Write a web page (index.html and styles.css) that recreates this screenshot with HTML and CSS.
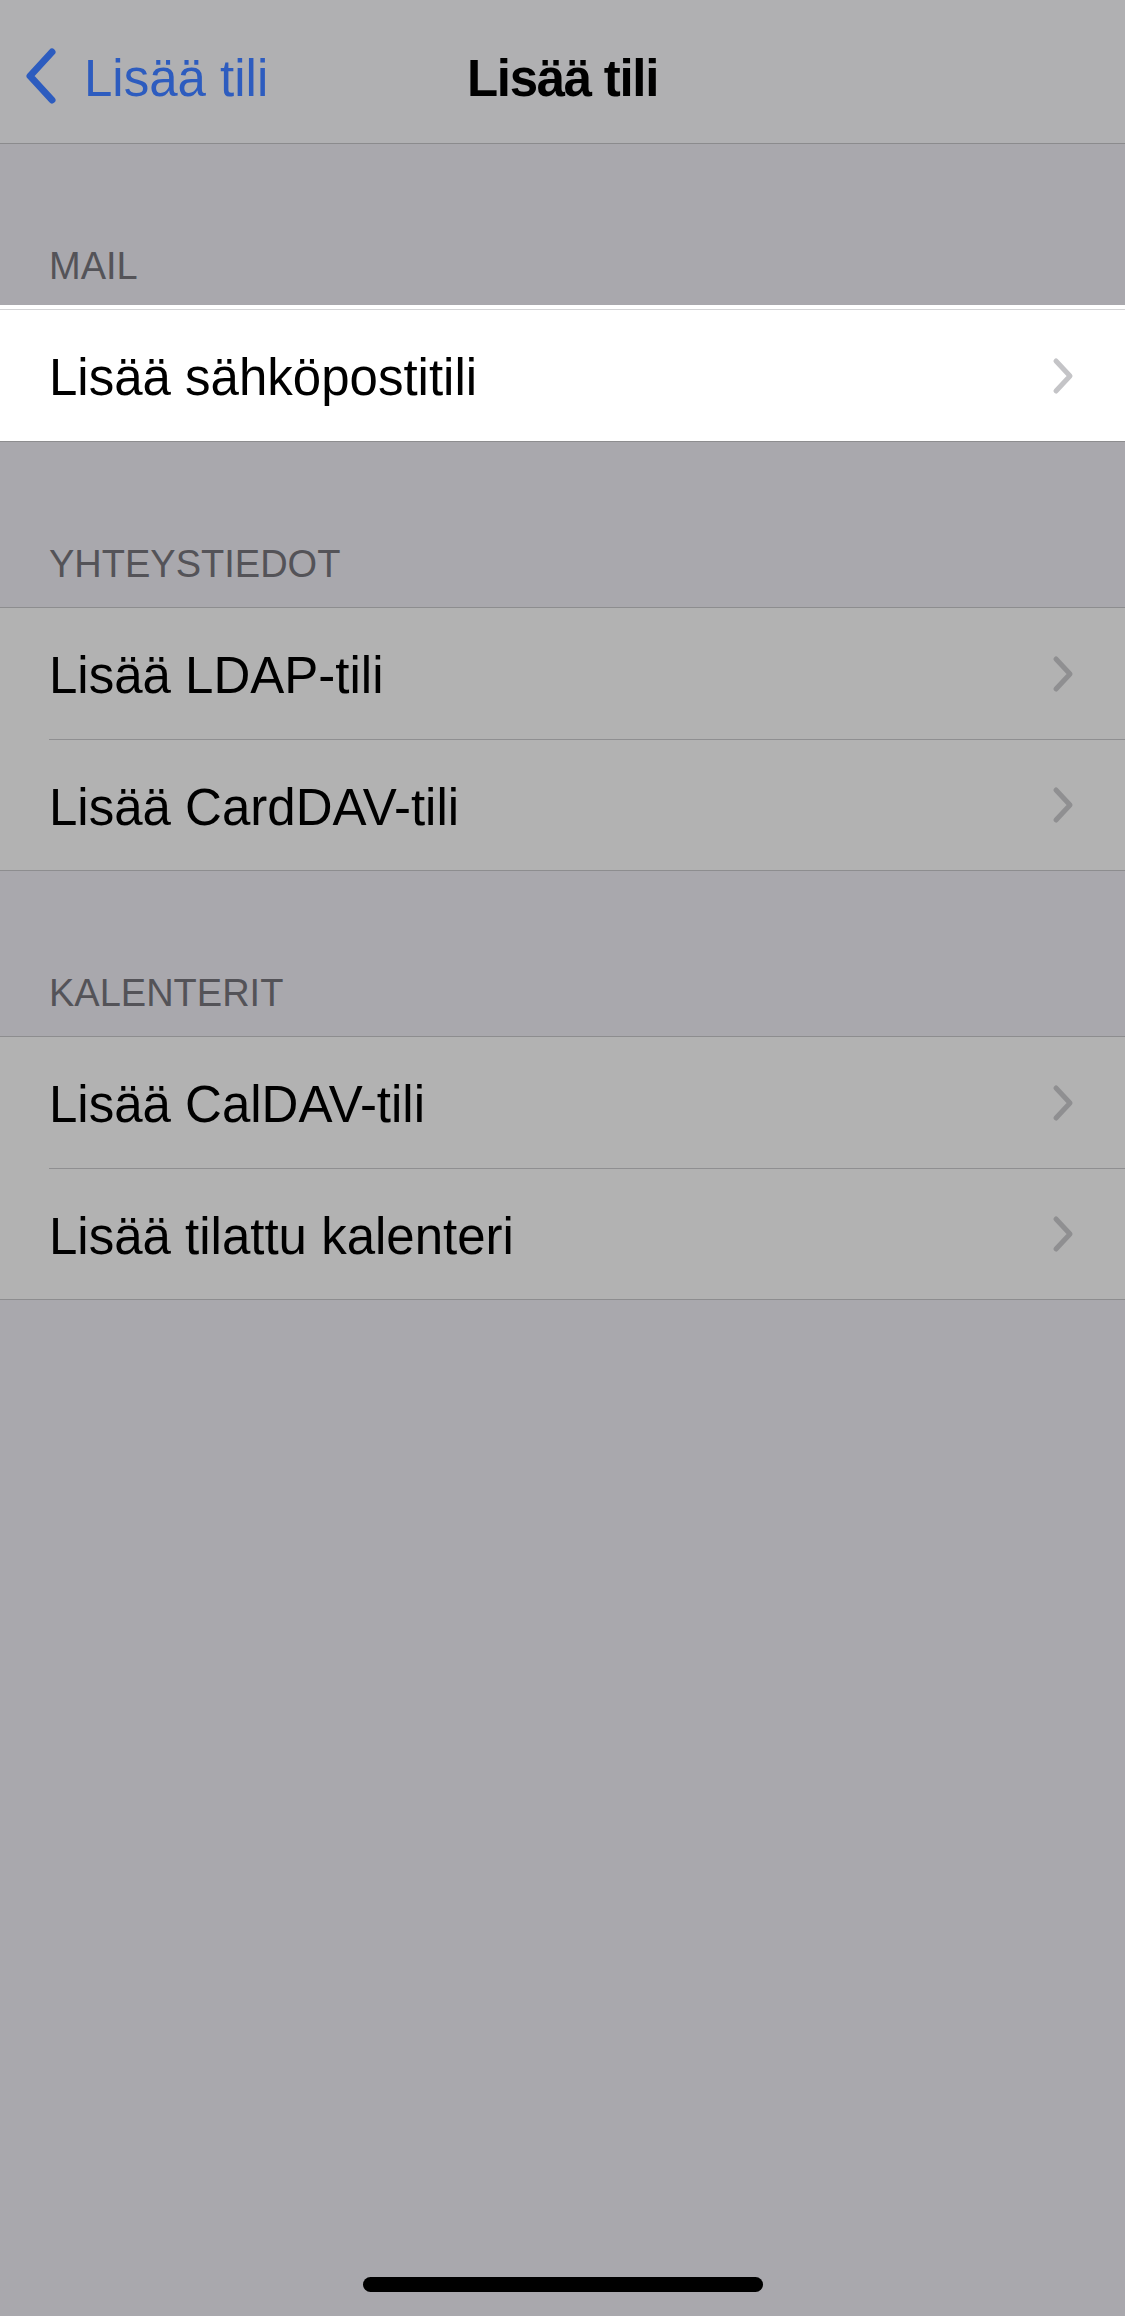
FILE: index.html
```html
<!DOCTYPE html>
<html lang="fi">
<head>
  <meta charset="UTF-8">
  <title>Lisää tili</title>
  <link rel="stylesheet" href="styles.css">
</head>
<body>
  <div class="screen">
    <header class="navbar">
      <a class="back" href="#">
        <svg class="back-icon" width="34" height="58" viewBox="0 0 34 58">
          <polyline points="29,5 7,29 29,53" fill="none" stroke="currentColor" stroke-width="7" stroke-linecap="round" stroke-linejoin="round"/>
        </svg>
        <span>Lisää tili</span>
      </a>
      <h1 class="title">Lisää tili</h1>
      <div></div>
    </header>

    <div class="section-header">MAIL</div>
    <ul class="group active">
      <li class="row">Lisää sähköpostitili<svg class="chevron" width="24" height="40" viewBox="0 0 24 40"><polyline points="5,5 19,20 5,35" fill="none" stroke="currentColor" stroke-width="5" stroke-linecap="round" stroke-linejoin="round"/></svg></li>
    </ul>

    <div class="section-header">YHTEYSTIEDOT</div>
    <ul class="group">
      <li class="row">Lisää LDAP-tili<svg class="chevron" width="24" height="40" viewBox="0 0 24 40"><polyline points="5,5 19,20 5,35" fill="none" stroke="currentColor" stroke-width="5" stroke-linecap="round" stroke-linejoin="round"/></svg></li>
      <li class="row">Lisää CardDAV-tili<svg class="chevron" width="24" height="40" viewBox="0 0 24 40"><polyline points="5,5 19,20 5,35" fill="none" stroke="currentColor" stroke-width="5" stroke-linecap="round" stroke-linejoin="round"/></svg></li>
    </ul>

    <div class="section-header">KALENTERIT</div>
    <ul class="group">
      <li class="row">Lisää CalDAV-tili<svg class="chevron" width="24" height="40" viewBox="0 0 24 40"><polyline points="5,5 19,20 5,35" fill="none" stroke="currentColor" stroke-width="5" stroke-linecap="round" stroke-linejoin="round"/></svg></li>
      <li class="row">Lisää tilattu kalenteri<svg class="chevron" width="24" height="40" viewBox="0 0 24 40"><polyline points="5,5 19,20 5,35" fill="none" stroke="currentColor" stroke-width="5" stroke-linecap="round" stroke-linejoin="round"/></svg></li>
    </ul>

    <div class="home-indicator"></div>
  </div>
</body>
</html>
```

FILE: styles.css
```css
body {
  margin: 0;
  font-family: "Liberation Sans", Arial, sans-serif;
  background-color: #a9a8ad;
  color: #000;
}

.screen {
  min-height: 2316px;
  display: flex;
  flex-direction: column;
}

.navbar {
  height: 144px;
  box-sizing: border-box;
  border-bottom: 1px solid #8b8b8d;
  background-color: #b0b0b2;
  display: grid;
  grid-template-columns: 1fr auto 1fr;
  align-items: start;
  padding-top: 48px;
}

.back {
  display: flex;
  align-items: center;
  color: #2d5cbf;
  text-decoration: none;
  font-size: 51px;
  line-height: 61px;
  margin-left: 23px;
}

.back-icon {
  margin-top: -6px;
  margin-right: 27px;
}

.title {
  margin: 0;
  font-size: 51px;
  line-height: 61px;
  font-weight: bold;
  letter-spacing: -1.3px;
}

.section-header {
  height: 165px;
  box-sizing: border-box;
  display: flex;
  align-items: flex-end;
  padding: 0 0 20px 49px;
  font-size: 38px;
  line-height: 46px;
  color: #545358;
}

.group {
  list-style: none;
  margin: 0;
  padding: 0;
  background-color: #b2b2b2;
  border-top: 1px solid #8d8d8f;
  border-bottom: 1px solid #8d8d8f;
}

.group.active {
  background-color: #fff;
  border-top-color: #d4d4d6;
  box-shadow: 0 -4px 0 #fff;
}

.row {
  height: 131px;
  box-sizing: border-box;
  margin-left: 49px;
  padding: 4px 50px 0 0;
  display: flex;
  align-items: center;
  justify-content: space-between;
  font-size: 51px;
  line-height: 61px;
}

.row + .row {
  border-top: 1px solid #8f8f91;
}

.chevron {
  color: #8f8f91;
  margin-top: -4px;
}

.active .chevron {
  color: #c4c4c7;
}

.home-indicator {
  margin: auto auto 24px;
  width: 400px;
  height: 15px;
  border-radius: 8px;
  background-color: #000;
}
```
